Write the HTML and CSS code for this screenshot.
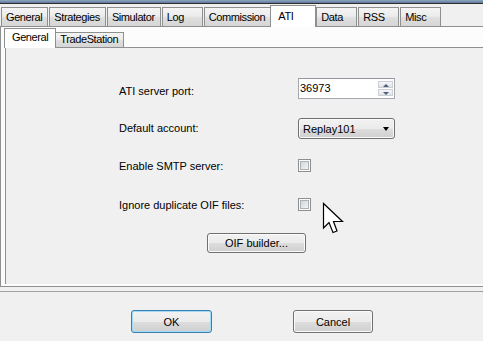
FILE: index.html
```html
<!DOCTYPE html>
<html lang="en">
<head>
    <meta charset="UTF-8">
    <meta name="viewport" content="width=device-width, initial-scale=1.0">
    <title>Options - ATI</title>
    <link rel="stylesheet" href="styles.css">
</head>
<body>
    <div class="frame-top"></div>
    <div class="tabrow">
        <div class="tab">General</div>
        <div class="tab">Strategies</div>
        <div class="tab">Simulator</div>
        <div class="tab">Log</div>
        <div class="tab">Commission</div>
        <div class="tab active">ATI</div>
        <div class="tab">Data</div>
        <div class="tab">RSS</div>
        <div class="tab">Misc</div>
    </div>
    <div class="page">
        <div class="subrow">
            <div class="subtab active">General</div>
            <div class="subtab">TradeStation</div>
        </div>
        <div class="subpage">
            <div class="form">
                <div class="row row-port">
                    <label class="label">ATI server port:</label>
                    <div class="spin">
                        <span class="spin-value">36973</span>
                        <div class="spin-buttons">
                            <span class="spin-btn up"></span>
                            <span class="spin-btn down"></span>
                        </div>
                    </div>
                </div>
                <div class="row row-account">
                    <label class="label">Default account:</label>
                    <div class="combo">Replay101</div>
                </div>
                <div class="row row-check">
                    <label class="label">Enable SMTP server:</label>
                    <span class="check"></span>
                </div>
                <div class="row row-check row-oif">
                    <label class="label">Ignore duplicate OIF files:</label>
                    <span class="check"></span>
                </div>
                <div class="row row-builder">
                    <button class="btn btn-builder">OIF builder...</button>
                </div>
            </div>
        </div>
    </div>
    <div class="footer">
        <button class="btn btn-dialog btn-default">OK</button>
        <button class="btn btn-dialog">Cancel</button>
    </div>

    <svg class="cursor" width="26" height="34" viewBox="0 0 26 34">
        <path d="M1.5 1.5 L1.5 26 L7 20.5 L11 30.5 L15 29 L11.5 19.5 L20.5 19.5 Z" fill="#fff" stroke="#000" stroke-width="1.2" stroke-linejoin="miter"/>
    </svg>
</body>
</html>
```

FILE: styles.css
```css
body {
    margin: 0;
    width: 483px;
    height: 341px;
    overflow: hidden;
    position: relative;
    background: #f0f0f0;
    font-family: "Liberation Sans", Arial, sans-serif;
    font-size: 11px;
    color: #000;
}

/* window frame edge */
.frame-top {
    height: 3px;
    background: linear-gradient(#8ea6c3, #5e7898);
    border-bottom: 1px solid #2e2e2e;
}

/* main tabs */
.tabrow {
    display: flex;
    align-items: flex-end;
    height: 22px;
    padding-left: 1px;
    border-bottom: 1px solid #8e8f8f;
}
.tab {
    box-sizing: border-box;
    height: 19px;
    min-width: 41px;
    padding: 1px 5px 0 4px;
    margin-right: 1px;
    border: 1px solid #8e8f8f;
    border-bottom: none;
    background: linear-gradient(#f4f4f4, #ececec 45%, #dedede 55%, #d6d6d6);
    line-height: 17px;
    letter-spacing: -0.4px;
    white-space: nowrap;
}
.tab.active {
    height: 22px;
    margin: 0 0 -1px -2px;
    padding: 2px 6px 0 7px;
    min-width: 46px;
    background: #fff;
}

/* outer tab page */
.page {
    box-sizing: border-box;
    height: 260px;
    padding: 1px 0 2px 2px;
    background: #fcfcfc;
    border-left: 1px solid #8e8f8f;
    border-bottom: 1px solid #8e8f8f;
}
.subrow {
    display: flex;
    align-items: flex-end;
    height: 19px;
    margin-left: 2px;
    padding-left: 1px;
    border-bottom: 1px solid #8e8f8f;
}
.subtab {
    box-sizing: border-box;
    height: 15px;
    padding: 0 5px 0 4px;
    border: 1px solid #8e8f8f;
    border-bottom: none;
    background: linear-gradient(#f4f4f4, #ececec 45%, #dedede 55%, #d6d6d6);
    line-height: 12px;
    letter-spacing: -0.4px;
}
.subtab.active {
    height: 20px;
    margin: 0 -1px -1px -2px;
    padding: 0 7px;
    background: #fff;
    line-height: 17px;
    position: relative;
}
.subpage {
    height: 236px;
    margin-left: 2px;
    border-left: 1px solid #8e8f8f;
    background: #f0f0f0;
}

/* form */
.form {
    padding: 30px 0 0 113px;
}
.row {
    display: flex;
    align-items: flex-start;
}
.label {
    width: 179px;
    line-height: 13px;
}
.row-port {
    height: 21px;
}
.row-port .label {
    padding-top: 7px;
}
.row-account {
    height: 21px;
    margin-top: 19px;
}
.row-account .label {
    padding-top: 4px;
}
.row-check {
    height: 13px;
    margin-top: 20px;
}
.row-check .label {
    padding-top: 1px;
}
.row-oif {
    margin-top: 26px;
}
.row-builder {
    margin-top: 22px;
    padding-left: 88px;
}

.spin {
    box-sizing: border-box;
    display: flex;
    width: 97px;
    height: 21px;
    border: 1px solid #a3a8b0;
    border-top-color: #9297a0;
    background: #fff;
}
.spin-value {
    flex: 1;
    padding: 3px 0 0 1px;
    line-height: 13px;
}
.spin-buttons {
    display: flex;
    flex-direction: column;
    gap: 1px;
    width: 15px;
    margin: 2px 1px 2px 0;
}
.spin-btn {
    box-sizing: border-box;
    flex: 1;
    position: relative;
    border: 1px solid #cbd0d6;
    background: linear-gradient(#f6f6f6, #e4e4e4);
}
.spin-btn::after {
    content: "";
    position: absolute;
    left: 4px;
    top: 2px;
    border-left: 3px solid transparent;
    border-right: 3px solid transparent;
}
.spin-btn.up::after {
    border-bottom: 3px solid #4d5f80;
}
.spin-btn.down::after {
    border-top: 3px solid #4d5f80;
}

.combo {
    box-sizing: border-box;
    display: flex;
    align-items: center;
    width: 97px;
    height: 21px;
    padding: 0 0 0 4px;
    border: 1px solid #707070;
    border-radius: 3px;
    background: linear-gradient(#f2f2f2, #ebebeb 50%, #dddddd 51%, #cfcfcf);
    box-shadow: inset 0 0 0 1px #fafafa;
}
.combo::after {
    content: "";
    margin: 1px 5px 0 auto;
    border-top: 4px solid #000;
    border-left: 3.5px solid transparent;
    border-right: 3.5px solid transparent;
}

.check {
    box-sizing: border-box;
    width: 13px;
    height: 13px;
    padding: 1px;
    border: 1px solid #8e8f8f;
    background: #fbfbfb;
}
.check::after {
    content: "";
    display: block;
    box-sizing: border-box;
    width: 9px;
    height: 9px;
    border: 1px solid #adb1b7;
    background: linear-gradient(135deg, #d2d5d9, #f4f4f4);
}

/* buttons */
.btn {
    box-sizing: border-box;
    padding: 0;
    border: 1px solid #707070;
    border-radius: 3px;
    background: linear-gradient(#f2f2f2, #ebebeb 50%, #dddddd 51%, #cfcfcf);
    box-shadow: inset 0 0 0 1px #fbfbfb;
    font-family: "Liberation Sans", Arial, sans-serif;
    font-size: 11px;
    color: #000;
}
.btn-builder {
    width: 99px;
    height: 20px;
}
.footer {
    display: flex;
    gap: 81px;
    margin-top: 4px;
    padding: 18px 0 0 131px;
    border-top: 1px solid #a0a0a0;
}
.btn-dialog {
    width: 80px;
    height: 23px;
}
.btn-default {
    width: 81px;
    border-color: #3c7fb1;
    box-shadow: inset 0 0 0 1px #9fdaf6;
}

.cursor {
    position: absolute;
    left: 322px;
    top: 202px;
}
```
